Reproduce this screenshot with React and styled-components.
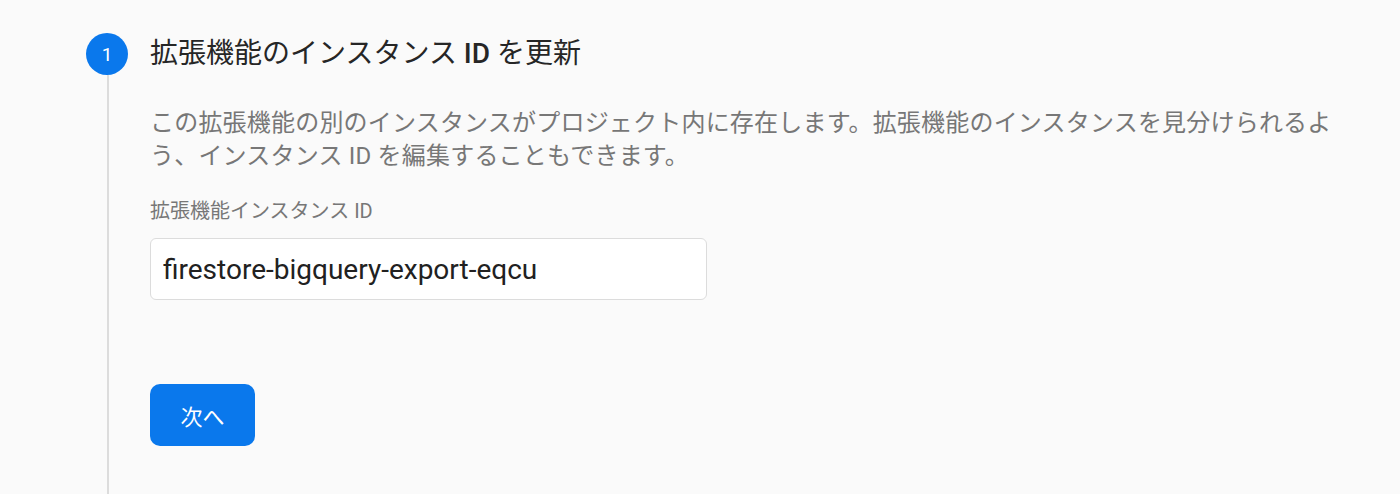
import React from "react";
import styled, { createGlobalStyle } from "styled-components";

const Global = createGlobalStyle`
  html, body { margin: 0; padding: 0; background: #fafafa; }
  body { font-family: Roboto, "Noto Sans CJK JP", sans-serif; }
`;

const Page = styled.div`
  height: 494px;
  overflow: hidden;
  padding: 33px 0 0 86px;
  box-sizing: border-box;
  display: grid;
  grid-template-columns: 42px 1fr;
  column-gap: 22px;
`;

const Rail = styled.div`
  display: flex;
  flex-direction: column;
  align-items: center;
`;

const Circle = styled.div`
  width: 42px;
  height: 42px;
  border-radius: 50%;
  background: #0a78ec;
  color: #fff;
  font-size: 19px;
  display: flex;
  align-items: center;
  justify-content: center;
  flex-shrink: 0;
`;

const Line = styled.div`
  width: 2px;
  flex: 1;
  background: #dcdcdc;
  margin-left: 1px;
`;

const Content = styled.div`
  display: flex;
  flex-direction: column;
  align-items: flex-start;
  padding-right: 52px;
`;

const Title = styled.h2`
  margin: 0;
  font-size: 28px;
  line-height: 42px;
  font-weight: 400;
  color: #262626;
`;

const Strong = styled.span`
  font-weight: 500;
`;

const Desc = styled.p`
  margin: 32px 0 0;
  font-size: 24px;
  line-height: 33px;
  letter-spacing: 0.2px;
  color: #777;
`;

const Label = styled.label`
  margin-top: 24px;
  font-size: 20px;
  line-height: 28px;
  color: #777;
`;

const Input = styled.input`
  margin-top: 13px;
  width: 557px;
  height: 62px;
  box-sizing: border-box;
  border: 1.5px solid #dcdcdc;
  border-radius: 6px;
  background: #fff;
  padding: 0 12px;
  font-family: Roboto, "Noto Sans CJK JP", sans-serif;
  font-size: 28px;
  color: #212121;
  outline: none;
`;

const Button = styled.button`
  margin-top: 84px;
  width: 105px;
  height: 62px;
  border: none;
  border-radius: 10px;
  background: #0a78ec;
  color: #fff;
  font-family: Roboto, "Noto Sans CJK JP", sans-serif;
  font-size: 22px;
  cursor: pointer;
`;

export default function App() {
  return (
    <>
      <Global />
      <Page>
        <Rail>
          <Circle>1</Circle>
          <Line />
        </Rail>
        <Content>
          <Title>
            拡張機能のインスタンス <Strong>ID</Strong> を更新
          </Title>
          <Desc>
            この拡張機能の別のインスタンスがプロジェクト内に存在します。拡張機能のインスタンスを見分けられるよう、インスタンス ID を編集することもできます。
          </Desc>
          <Label>拡張機能インスタンス ID</Label>
          <Input defaultValue="firestore-bigquery-export-eqcu" readOnly />
          <Button>次へ</Button>
        </Content>
      </Page>
    </>
  );
}
